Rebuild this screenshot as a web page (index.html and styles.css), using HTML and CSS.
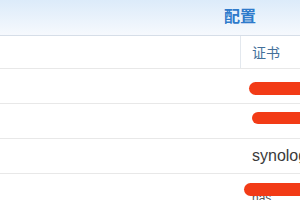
FILE: index.html
```html
<!DOCTYPE html>
<html lang="zh-CN">
<head>
    <meta charset="UTF-8">
    <meta name="viewport" content="width=device-width, initial-scale=1.0">
    <title>配置</title>
    <link rel="stylesheet" href="styles.css">
</head>
<body>
    <div class="topbar">
        <span class="tab">配置</span>
    </div>
    <div class="table">
        <div class="row head">
            <div class="cell name"></div>
            <div class="cell cert">证书</div>
        </div>
        <div class="row">
            <div class="cell name"></div>
            <div class="cell cert"><span class="redact r1"></span></div>
        </div>
        <div class="row">
            <div class="cell name"></div>
            <div class="cell cert"><span class="redact r2"></span></div>
        </div>
        <div class="row">
            <div class="cell name"></div>
            <div class="cell cert">synology.me</div>
        </div>
        <div class="row">
            <div class="cell name"></div>
            <div class="cell cert">
                <span class="hidden-text">nas</span>
                <span class="redact r3"></span>
            </div>
        </div>
    </div>
</body>
</html>
```

FILE: styles.css
```css
body {
    margin: 0;
    font-family: "Liberation Sans", "Noto Sans CJK SC", sans-serif;
    background: #fff;
    overflow: hidden;
}

.topbar {
    height: 35px;
    border-bottom: 1px solid #d6dee8;
    background: linear-gradient(#dcebfa, #f6f9fd);
    display: flex;
    align-items: flex-start;
    justify-content: flex-end;
    padding-right: 44px;
}

.tab {
    font-family: "Noto Sans CJK SC", sans-serif;
    font-size: 16px;
    line-height: 16px;
    font-weight: bold;
    color: #2e7acb;
    padding-top: 7px;
}

.row {
    display: flex;
    height: 34px;
    border-bottom: 1px solid #e8e8e8;
}

.row.head {
    height: 32px;
}

.cell {
    display: flex;
    align-items: center;
}

.name {
    width: 240px;
    flex-shrink: 0;
}

.cert {
    position: relative;
    flex: 1;
    padding-left: 12px;
    white-space: nowrap;
    overflow: hidden;
    font-size: 16px;
    color: #3a3a3a;
}

.head .cert {
    border-left: 1px solid #e3e8ee;
    padding-left: 11px;
    font-family: "Noto Sans CJK SC", sans-serif;
    font-size: 14px;
    color: #44709a;
}

.hidden-text {
    margin-top: 14px;
    font-size: 12px;
    color: #555;
}

.redact {
    position: absolute;
    height: 13px;
    width: 80px;
    background: #f23b16;
    border-radius: 7px 0 0 7px;
}

.r1 {
    left: 9px;
    top: 13px;
}

.r2 {
    left: 12px;
    top: 8px;
    height: 12px;
}

.r3 {
    left: 4px;
    top: 9px;
}
```
